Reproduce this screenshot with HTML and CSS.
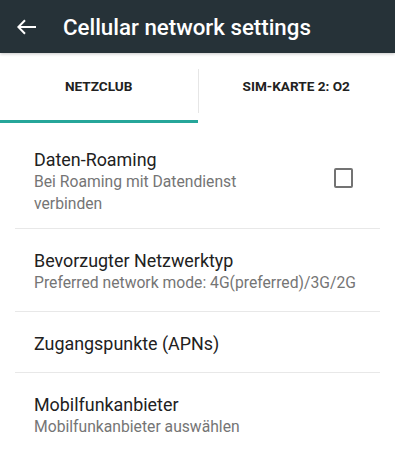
FILE: index.html
```html
<!DOCTYPE html>
<html lang="de">

<head>
    <meta charset="UTF-8">
    <meta name="viewport" content="width=device-width, initial-scale=1.0">
    <title>Cellular network settings</title>
    <link rel="stylesheet" href="styles.css">
</head>

<body>
    <header class="toolbar">
        <svg class="back-icon" width="20" height="16" viewBox="0 0 20 16">
            <path d="M1 8H19M8 1.3L1.3 8L8 14.7" fill="none" stroke="#fff" stroke-width="2" />
        </svg>
        <h1 class="toolbar-title">Cellular network settings</h1>
    </header>

    <div class="tabs">
        <div class="tab active">NETZCLUB</div>
        <div class="tab">SIM-KARTE 2: O2</div>
    </div>

    <ul class="prefs">
        <li class="pref pref-check">
            <div class="pref-text">
                <div class="pref-title">Daten-Roaming</div>
                <div class="pref-summary">Bei Roaming mit Datendienst verbinden</div>
            </div>
            <span class="checkbox"></span>
        </li>
        <li class="pref">
            <div class="pref-text">
                <div class="pref-title">Bevorzugter Netzwerktyp</div>
                <div class="pref-summary">Preferred network mode: 4G(preferred)/3G/2G</div>
            </div>
        </li>
        <li class="pref">
            <div class="pref-text">
                <div class="pref-title">Zugangspunkte (APNs)</div>
            </div>
        </li>
        <li class="pref">
            <div class="pref-text">
                <div class="pref-title">Mobilfunkanbieter</div>
                <div class="pref-summary">Mobilfunkanbieter auswählen</div>
            </div>
        </li>
    </ul>
</body>

</html>
```

FILE: styles.css
```css
*,
*:before,
*:after {
    box-sizing: border-box;
    margin: 0;
    padding: 0;
}

html,
body {
    width: 100%;
    height: 100%;
    overflow: hidden;
}

body {
    font-family: Roboto, "Noto Sans", sans-serif;
    background: #fff;
    color: #212121;
}

.toolbar {
    position: relative;
    z-index: 1;
    display: flex;
    align-items: center;
    height: 53px;
    padding-left: 17px;
    background: #263238;
    box-shadow: 0 1px 3px rgba(0, 0, 0, 0.22);
}

.toolbar .back-icon {
    display: block;
    flex: none;
}

.toolbar-title {
    margin-left: 26px;
    color: #fff;
    font-size: 22.3px;
    font-weight: 500;
    line-height: 53px;
    padding-top: 1px;
}

.tabs {
    display: flex;
    height: 70px;
}

.tab {
    position: relative;
    flex: 1;
    display: flex;
    align-items: center;
    justify-content: center;
    padding-bottom: 1px;
    font-size: 13.6px;
    font-weight: 700;
    color: #212121;
    border-bottom: 3px solid transparent;
}

.tab + .tab:before {
    content: "";
    position: absolute;
    left: 0;
    top: 16px;
    bottom: 7px;
    border-left: 1px solid #e6e6e6;
}

.tab.active {
    border-bottom-color: #26a69a;
}

.prefs {
    list-style: none;
    padding-top: 5px;
}

.pref {
    display: flex;
    align-items: center;
    margin: 0 15px;
    padding: 20px 10px 17px 19px;
    border-bottom: 1px solid #e8e8e8;
}

.pref:last-child {
    border-bottom: none;
}

.pref.pref-check {
    padding-bottom: 13px;
}

.pref-text {
    flex: 1;
}

.pref-check .pref-text {
    padding-right: 77px;
}

.pref-title {
    font-size: 17.9px;
    line-height: 23px;
    color: #212121;
}

.pref-summary {
    font-size: 15.7px;
    line-height: 22px;
    color: #757575;
}

.checkbox {
    flex: none;
    width: 19.5px;
    height: 19.5px;
    margin-right: 17px;
    margin-bottom: 7px;
    border: 2.5px solid #737373;
    border-radius: 2px;
}
```
